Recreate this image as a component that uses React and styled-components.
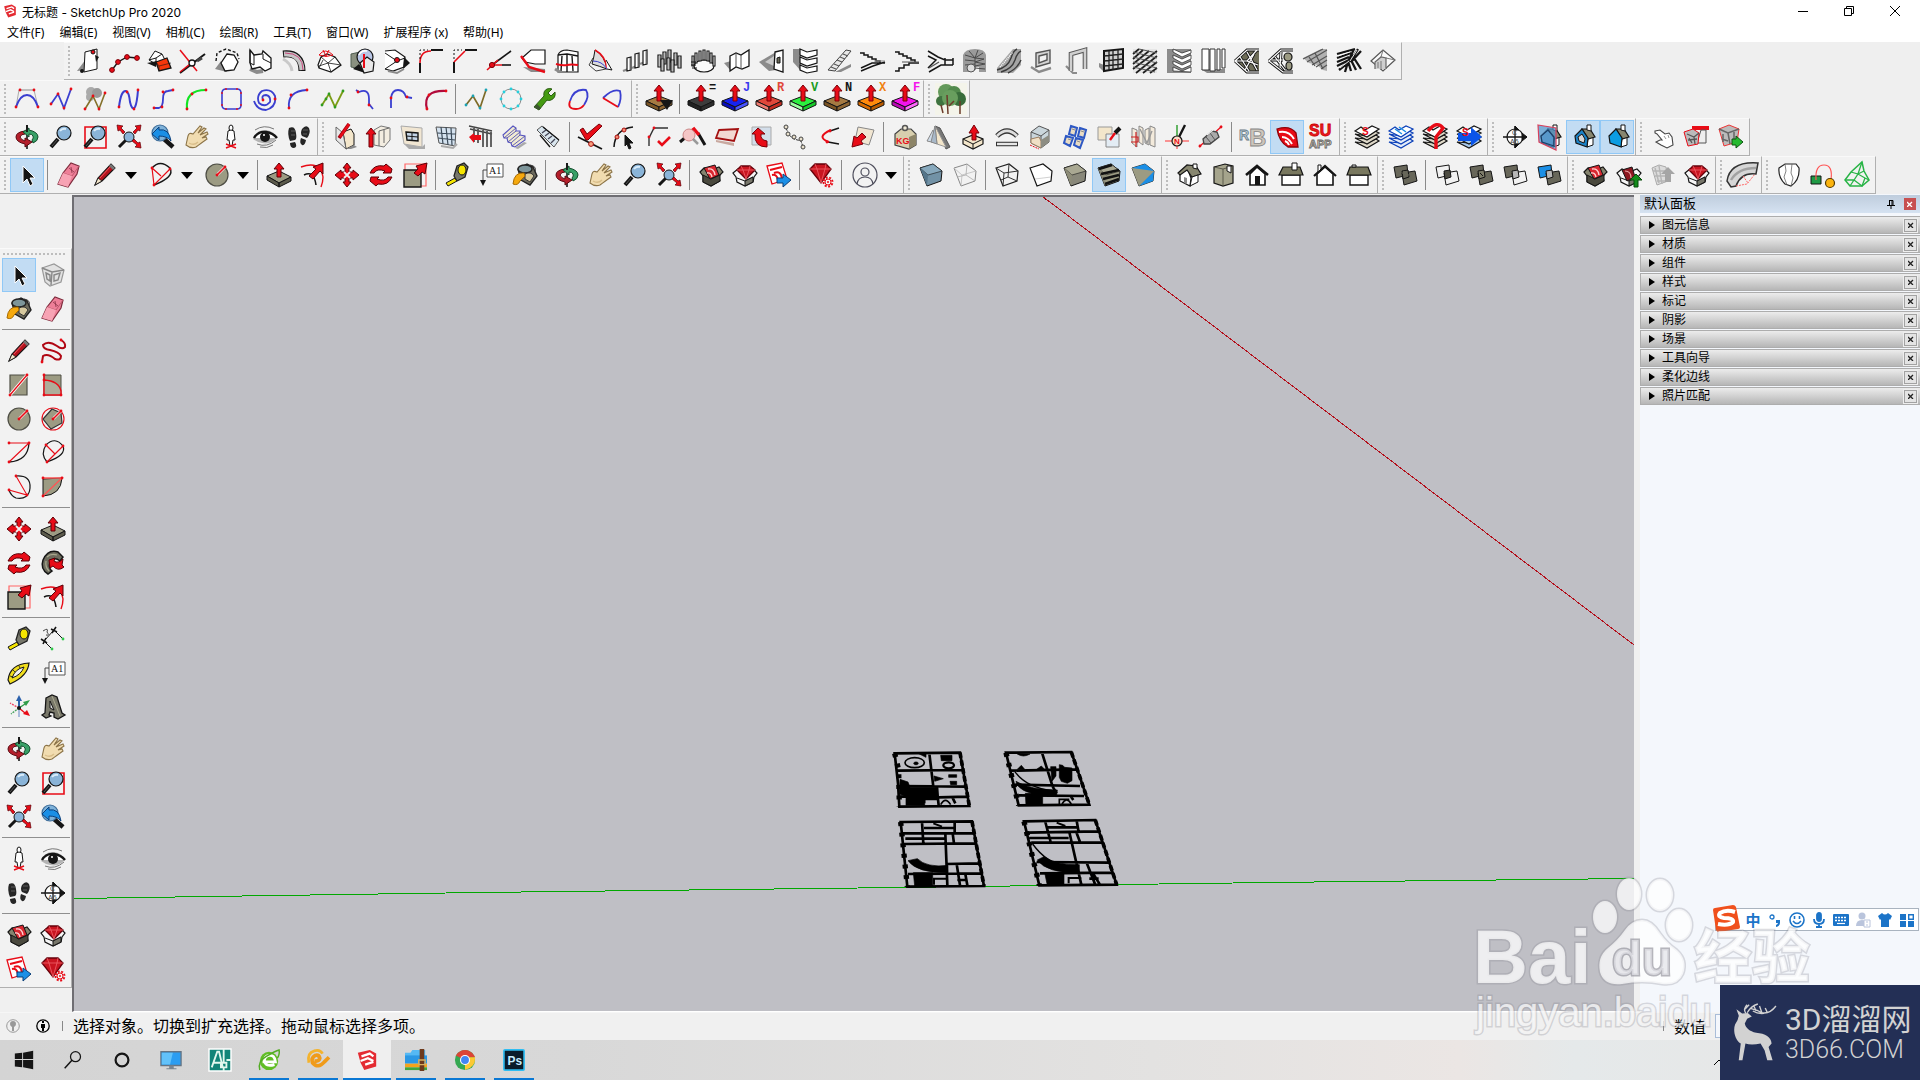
import React, { useState } from 'react';
import styled, { createGlobalStyle, css } from 'styled-components';

const GlobalStyle = createGlobalStyle`
  * { box-sizing: border-box; }
  body {
    margin: 0;
    overflow: hidden;
    background: #f0f0f0;
    color: #000;
    font-family: "Noto Sans", "Noto Sans CJK SC", sans-serif;
    font-size: 12px;
  }
  button, input {
    font: inherit;
    color: inherit;
  }
`;

// ---- icon drawing data: [path, stroke, fill, strokeWidth, dash] on a 24x24 grid ----

const K = '#151515';
const W = '#ffffff';
const R = '#e80c17';
const G = '#8b8b8b';
const L = '#c9c9c9';
const TAN = '#9c9b83';
const DK = '#6b6a59';
const B = '#3a3fd0';
const SKY = '#1b8fe6';
const CREAM = '#f3e6cb';
const GREEN = '#1f9a45';

const dot = (x, y, r = 2) => `M${x - r} ${y}a${r} ${r} 0 1 0 ${2 * r} 0a${r} ${r} 0 1 0 ${-2 * r} 0Z`;
const oval = (x, y, rx, ry) => `M${x - rx} ${y}a${rx} ${ry} 0 1 0 ${2 * rx} 0a${rx} ${ry} 0 1 0 ${-2 * rx} 0Z`;
const dots = (color, ...points) => points.map(([x, y]) => [dot(x, y, 1.4), '', color]);

const slab = (top, left, right, letter, letterColor) => [
  ['M-1 14L12 9L25 14L12 20Z', K, top],
  ['M-1 14L12 20V24L-1 18Z', K, left],
  ['M12 20L25 14V18L12 24Z', K, right],
  ['M12 -2L17 4H14V14H10V4H7Z', '#7a0008', R],
  ...(letter ? [{ t: letter, x: 20, y: 4, s: 12, c: letterColor, f: 'Liberation Mono', w: 700 }] : []),
];

const lens = [
  ['M9 14L2 22', K, '', 4],
  ['M8 15L3 21', '#555', '', 1],
  [dot(15, 8, 7), K, '#8ab4d8', 1.2],
  ['M11 6Q13 3 17 4', '#d9ecfa', '', 2],
];

const smallLens = [
  ['M9 15L2 22', K, '', 3],
  [dot(12, 12, 5), K, '#8ab4d8', 1],
];

const cubeShape = 'M1 5L14 1L23 8L22 18L8 23Z';
const cube = (left, right, top, line = K) => [
  [cubeShape, line, right],
  ['M1 5L14 1L23 8L9 12Z', line, top, 0.6],
  ['M1 5L9 12L8 23Z', '', left],
];

const overlap = (a, b, mid) => [
  ['M1 4L14 2L15 12L3 15Z', K, a],
  ['M9 10L22 8L24 18L11 22Z', K, b],
  ['M9 8L15 7L16 14L10 16Z', K, mid],
];

const box = (top) => [
  ['M1 9L5 5L12 7L20 4L24 9L20 13L21 18L12 23L4 19L4 13Z', K, '#85846f', 1.2],
  ['M4 12L12 16L21 12V18L12 23L4 19Z', K, '#4a493e'],
  ['M5 5L16 2L20 12L11 16Z', K, top],
];

const whiteBox = [
  ['M0 10L5 6L12 9L20 6L24 10L21 14L20 19L12 23L4 19L3 14Z', K, '#f6f6f6', 1.2],
  ['M4 15L12 18L20 14', K, ''],
  ['M12 18L20 14V19L12 23Z', K, '#77766a'],
];

const layers = (line, fill) => [
  ['M0 17L12 23L24 16L21 14L12 18Z', line, fill, 1.2],
  ['M0 13L12 19L24 12L21 10L12 14Z', line, fill, 1.2],
  ['M0 9L12 15L24 8L20 6L12 11Z', line, fill, 1.2],
  ['M0 6L6 2L10 5L17 1L24 4L12 12Z', line, W, 1.2],
];

const miniHouse = (wall) => [
  ['M17 13L22 12V20L16 22Z', K, W],
  ['M11 4L19 4L24 12L17 14Z', K, '#87866f', 1.2],
  ['M4 11L11 4L17 13L16 22L5 18Z', K, wall, 1.2],
  ['M16 0H20V6L16 5Z', K, W],
];

const sketchupBlock = (fill) => [
  ['M0 3L15 0L20 16L5 21Z', R, fill, 1.3],
  ['M3 7L15 4M7 10Q14 7 15 16M5 12Q10 11 11 17', fill === W ? R : W, '', 2],
];

const stairs = (n, line = K, x0 = 1, y0 = 3) => {
  let d = `M${x0} ${y0}`;
  for (let i = 0; i < n; i += 1) d += 'h4v2';
  return [d, line, '', 1.5];
};

const icons = {
  sheet: [['M-2 22L7 10L10 21Z', '', G], ['M6 3L18 0L18 20L5 23Z', K, W], [dot(14, 3), K, R], [dot(3, 22), '', K], ['M16 6L20 8L17 13Z', '', K]],
  nodes: [['M-1 21L5 13L14 8L24 9', K, '', 1.4], ...[[-1, 21], [5, 13], [14, 8], [24, 9]].map(([x, y]) => [dot(x, y, 2.4), '#7a0008', R])],
  redBox: [['M2 11L8 2L15 5L18 11L9 15Z', K, W], ['M2 11L9 9L15 5M9 9L9 15', K, ''], ['M0 14L10 12L9 18Z', '', K], ['M9 13L20 9L24 19L12 22Z', K, '#f5370b', 1.3], ['M9 13L12 17L12 22M12 17L24 14', K, '', 0.6]],
  cut: [['M-1 1L16 22', R, '', 1.5], ['M-1 24L24 5', K, '', 2], ['M-1 23L9 15', R, '', 1.5], ['M16 12L21 9', '#444', '', 3], [dot(11, 14, 3), K, W, 1.3]],
  hexDash: [['M0 20L6 12L12 23Z', '', G], ['M1 12L2 4L11 0L22 4L24 10', K, '', 1.4, '3 2'], ['M12 5L19 6L23 13L19 21L10 22L6 14Z', K, W, 1.3]],
  push: [['M1 20L8 23L14 22', G, '', 4], ['M1 1L5 6L13 5L14 2L22 9V19L16 22L11 18L3 20L1 14Z', K, W, 1.3], ['M1 1V14L5 16V6M14 10L22 14M14 10V5', K, '']],
  pipe: [['M0 10Q8 14 9 22', L, '', 3], ['M0 5Q19 3 19 22', K, '', 7], ['M1 5Q18 4 19 21', '#c6c6c6', '', 5], ['M2 4Q20 4 20 21', '#c8487c', '', 1]],
  dome: [['M1 16L4 8L10 5L18 8L24 16L14 23L2 19Z', K, W, 1.2], ['M2 17L11 14L24 16M11 14L14 23M4 8L11 14L18 8M2 19L6 11', K, '', 0.8], ['M2 6Q8 -2 16 6Q9 9 2 6M6 1L9 7L12 1', R, '']],
  sphereMix: [['M0 5L9 3L12 12L10 20L0 18Z', '#4f5d50', '#8a9080'], ['M2 20L14 24L8 15Z', '', K], [dot(14, 8, 8), K, '#b9c6e6', 1.2], ['M9 14L16 8L23 13L22 22L13 24Z', K, '#e9e9e9', 1.2], ['M13 5V19', R, '', 2], ['M8 6Q10 1 16 2', W, '', 1.6]],
  hexCone: [['M0 2L10 1L20 8L19 18L8 22L0 20', K, W, 1.2], ['M0 4L12 12L0 20', K, ''], ['M12 12L20 9', K, ''], ['M19 8L25 14L18 20Z', '', K], [dot(12, 11, 2.5), K, R], ['M3 22L12 24L19 20', G, '', 2]],
  fillet: [['M1 24V14', K, '', 2], ['M1 14Q1 2 12 2', R, '', 1.6], ['M12 1H24', K, '', 2], ['M1 10V1H9', K, '', 1, '2 2']],
  chamfer: [['M1 24V13', K, '', 2], ['M1 13L12 2', R, '', 1.6], ['M12 1H24', K, '', 2], ['M1 10V1H9', K, '', 1, '2 2']],
  angle: [['M5 16L24 2', K, '', 1.6], ['M0 21L11 11M5 16H15', R, '', 1.6], ['M15 16H24', K, '', 1.6], [dot(5, 16, 2.6), '#7a0008', R]],
  redEdge: [['M1 9L10 1H24V15H14L4 13Z', K, W, 1.2], ['M2 18L10 23H24V20Z', '', G], ['M0 7L3 11L8 18L24 23', R, '', 2.4]],
  redWave: [['M3 6Q5 1 12 1L23 3V23H3Z', K, W, 1.2], ['M3 6L12 5L23 7M12 5V23M7 7L6 22M17 7L18 22', K, '', 1.4], ['M0 20L5 23', G, '', 3], ['M1 15Q8 17 12 16T23 16', R, '', 2]],
  sail: [['M0 16L4 9L22 19L7 22Z', K, '#f4f4f4', 0.8], ['M3 15Q5 8 6 1Q16 7 18 20Q10 17 3 15Z', K, '#dcdcdc'], ['M6 1Q17 7 18 20', R, '', 1.5], ['M4 12Q13 12 18 20', B, ''], ['M18 20L23 21L17 11', K, W]],
  posts: [['M0 22L8 19M9 19L16 16M17 15L22 13', G, '', 2.4], ['M4 9L8 8V21L4 22ZM12 5L16 4V18L12 19ZM20 2L24 1V15L20 16Z', K, W, 1.2], ['M7 9V21M15 5V18M23 2V15', '#555', '', 0.8]],
  manyPosts: [[1, 6], [6, 3], [11, 1], [17, 4], [21, 7], [4, 10], [10, 9], [14, 11]].flatMap(([x, y]) => [[`M${x} ${y}h3v12h-3Z`, K, W, 1.2], [`M${x + 2} ${y + 1}v11`, '#555', '', 0.8]]),
  ringPosts: [[oval(13, 17, 10, 6), K, '#fafafa', 1.2], ...[1, 4, 8, 12, 16, 19, 22].map((x, i) => [`M${x} ${[7, 4, 2, 1, 2, 4, 7][i]}h2v10h-2Z`, K, W, 1.1]), ['M0 13H5M0 16H5M1 19H6', K, '', 1.2]],
  screen: [['M-1 14L6 12V22Z', '', G], ['M5 7L11 4L16 6L24 1V17L17 20L11 18L5 22Z', K, W, 1.3], ['M11 4V18M16 6V20', '#555', '']],
  wedgeWindow: [['M0 13L17 3V21L10 22Z', '', G], ['M6 13L15 7V17Z', '', L], ['M16 3L24 1V23L15 20Z', K, W, 1.3], ['M18 9L21 8V14L18 14Z', K, DK]],
  shelves: [['M0 0H8V22L0 13Z', '', '#8c8c8c'], ['M7 0L14 3L24 1V6L14 9L7 6ZM7 8L14 11L24 9V14L14 17L7 14ZM7 16L14 19L24 17V22L14 24L7 21Z', K, W, 1.2]],
  ladder: [['M8 23L24 15L24 18L14 23Z', '', G], ['M1 21L19 1L24 2L8 22Z', '#444', '#e8e8e8'], ['M4 18L9 20M7 15L12 17M10 11L15 13M13 8L18 10M16 5L21 7', '#555', '', 1.1]],
  zig1: [stairs(5, K, -1, 4), ['M0 22L12 17L24 13M0 19L11 14H24', K, '', 1.4], ['M13 12H24', G, '']],
  zig2: [stairs(5, K, 0, 3), ['M0 22H4V19H9V16H14V14H24', K, '', 1.5], ['M7 13H24', '#555', '']],
  zig3: [['M-1 2L9 8L16 11H24M-1 7L7 11L-1 19M0 23L12 16H24M16 9V16M24 9V16', K, '', 1.5], ['M0 19L10 13', '#555', '', 1.2]],
  spiral: [['M0 6Q2 0 12 0T23 6V23H16V18H6V23H0Z', '', '#9a9a9a'], ['M2 6L12 9L20 4M6 2L12 9L15 1M12 9V21M12 9L21 10L12 13L22 15L12 17M2 11L12 12M2 16L12 15M12 19L22 20', '#4a4a4a', ''], [oval(8, 19, 4, 4), '#555', '#ddd']],
  escalator: [['M4 14L16 0H24V16L16 24H0V19Z', '', '#a5a5a5'], ['M0 21Q11 18 14 9Q16 2 20 0M4 23Q15 20 18 11Q20 4 24 2M11 24Q20 20 24 11', '#3c3c3c', '', 1.4], ['M3 18L16 3', W, '', 1.4, '1 1']],
  frame: [['M0 18L8 23L20 19', G, '', 2.4], ['M5 4L19 1V14L5 18ZM8 7L16 5V11L8 14Z', '#555', '#d4d4d4', 1.4, '']],
  archFrame: [['M1 17L8 24H12', G, '', 2.2], ['M6 22V5L20 1V20', '#555', '', 4.6], ['M6 22V5L20 1V20', '#d0d0d0', '', 2.6]],
  gridWall: [['M0 14L5 16V23L0 18Z', '', G], ['M5 2L24 0V19L5 22Z', K, '#cfcfcf', 2], ['M10 2V21M14 1V21M19 1V20M5 7L24 5M5 12L24 10M5 17L24 15', '#222', '', 1.3]],
  lattice: [['M0 0H24V24H0Z', '', '#e6e6e6'], ['M0 5L6 0M0 10L10 1M0 15L16 2M0 20L24 2M3 24L24 7M10 24L24 13M17 24L24 19', '#1d1d1d', '', 1.7], ['M0 3L24 9M0 8L24 14M0 13L24 19M0 18L22 23M6 0L24 4', '#555', '', 1]],
  chevrons: [['M0 0H24V24H0Z', '', '#8c8c8c'], ['M6 0L15 4L24 1V4L15 8L6 3ZM6 6L15 10L24 6V10L15 14L6 9ZM6 12L15 16L24 12V16L15 20L6 15ZM6 18L15 22L24 18V23L6 22Z', '#333', W, 0.8]],
  louvres: [['M0 20L6 24H24V20Z', '', G], ['M1 0H8V21H1ZM9 0H14V22H9ZM16 0H19V21H16ZM21 0H24V19H21Z', '#333', W, 1]],
  truss1: [['M0 12L12 0H24V24H11Z', '', '#6e6d58'], ['M0 12L12 1H24M0 12L12 23H24M0 12H12M5 8L14 22M12 3L22 21M22 1L12 12L23 16M10 21L19 5', K, '', 3], ['M0 12L12 1H24M0 12L12 23H24M0 12H12M5 8L14 22M12 3L22 21M22 1L12 12L23 16M10 21L19 5', W, '', 1.2]],
  truss2: [['M0 12L12 1H24M0 12L14 23H24M3 11H14M6 8L16 21M12 3L11 18', K, '', 3], ['M0 12L12 1H24M0 12L14 23H24M3 11H14M6 8L16 21M12 3L11 18', W, '', 1.2], [oval(19, 8, 4, 4), K, TAN, 1.2], [oval(20, 17, 3, 4), K, TAN, 1.2]],
  corrugated: [['M0 9L18 0H24V22L20 21L14 16L6 14Z', '', '#b0b0b0'], ['M0 10L20 0M4 13L24 1M9 16L24 7M13 18L24 11M18 20L24 16M6 8L12 17M12 4L20 20', '#555', '', 1.2]],
  rafters: [['M0 5L18 0M0 9L14 4M0 13L12 8M0 17L12 11M2 21L12 13M17 0L11 13M21 0L13 13M24 2L14 13M24 20L15 6M19 21L13 9M14 22L11 12M8 23L11 13', K, '', 2.3], ['M1 7L13 3M20 1L13 12M3 19L12 12', W, '', 0.9]],
  roof: [['M0 12L12 1L24 11L12 22Z', '#555', '#fafafa', 1.2], ['M4 20V13L10 8L15 9V20', '#666', '#cfcfcf', 1.2], ['M12 1L10 8M15 9L24 11M7 19V13M10 20V12', '#777', '']],

  bezier: [['M4 3H19', G, ''], ['M4 3L1 20M19 3L23 20', G, '', 0.7], ['M1 20Q5 8 12 8T23 20', B, '', 2], ...dots(R, [5, 3], [19, 3], [1, 20], [23, 20])],
  polyN: [['M2 17L9 7L15 21L22 2', B, '', 1.8], ...dots(R, [2, 17], [9, 7], [15, 21], [22, 2])],
  cloudN: [[dot(8, 5, 5), '', '#aaa'], [dot(14, 6, 5), '', '#999'], [dot(7, 10, 4), '', '#aaa'], ['M2 22L10 9L16 22L22 6', '#84702a', '', 1.6], ...dots(R, [2, 22], [10, 9], [16, 22], [22, 6])],
  smoothN: [['M2 20Q4 3 9 4Q12 5 13 15Q15 24 18 20Q20 16 21 3', B, '', 2], ...dots(R, [2, 20], [10, 5], [17, 22], [21, 3])],
  sCurve: [['M3 21H8Q12 20 12 12T17 4L22 3', B, '', 1.8], ...dots(R, [3, 21], [11, 20], [12, 5], [22, 3])],
  greenArc: [['M2 22Q0 3 21 3', '#11e422', '', 2.2], ...dots(R, [2, 22], [7, 7], [21, 3])],
  roundRect: [['M7 2H18Q22 2 22 6V18Q22 22 18 22H7Q3 22 3 18V6Q3 2 7 2Z', B, '', 1.6], ...[[7, 2], [18, 2], [22, 6], [22, 18], [18, 22], [7, 22], [3, 18], [3, 6]].map(([x, y]) => [dot(x, y, 0.9), '', R])],
  swirl: [['M10 13Q8 8 13 8Q18 9 17 15Q12 21 6 16Q3 9 9 4Q18 1 22 9Q24 20 13 23Q4 23 1 14', B, '', 1.8], ...dots(R, [10, 13], [22, 12])],
  blueArc: [['M2 21Q0 4 20 3', B, '', 1.8], ...dots(R, [2, 21], [4, 8], [20, 3])],
  greenN: [['M1 18L8 7L14 20L22 4', '#7b9b16', '', 1.8], ...dots('#2f9d1f', [1, 18], [5, 12], [8, 7], [14, 20], [22, 4])],
  hook: [['M1 3L4 5Q14 1 14 12L14 17L18 22', B, '', 1.8], ...dots(R, [3, 5], [14, 18])],
  cane: [['M2 21V11Q3 3 9 3Q15 3 17 10L23 11', B, '', 1.8], ...dots(R, [2, 11], [18, 10])],
  wineArc: [['M4 22Q-1 3 23 4', '#b10b3b', '', 2.2], ...dots(R, [4, 22], [6, 8], [23, 4])],
  cyanN: [['M1 18L8 9L15 21L21 3', '#7d6b28', '', 1.7], ...dots('#1aa3b5', [1, 18], [8, 9], [15, 21], [21, 3])],
  ring: [[dot(12, 12, 10), G, ''], ...dots('#23d0dd', [12, 2], [19, 5], [22, 12], [19, 19], [12, 22], [5, 19], [2, 12], [5, 5])],
  wrench: [['M1 20L11 9Q10 4 14 2Q17 1 19 2L15 6L18 9L22 5Q23 11 18 13Q15 14 14 13L6 23Z', '#2c5d14', '#459b12'], ['M1 20L4 17L8 21L6 23Z', '', '#3c5530']],
  loop: [['M3 14Q7 1 19 3Q23 9 17 18', B, '', 1.8], ['M3 14Q0 22 9 22Q14 22 17 18', R, '', 1.8]],
  wedge: [['M2 11Q12 1 19 4Q21 12 17 20', B, '', 1.8], ['M2 11L17 20', R, '', 1.8]],
  slabMenu: [...slab('#a57a42', '#7a5423', '#8c6431'), ['M13 13H26L20 23Z', '', K]],
  slabBlack: slab('#3c3c3c', '#222', '#2c2c2c', '=', K),
  slabBlue: slab('#1723f0', '#080dba', '#4752ff', 'J', '#3a3aee'),
  slabRed: slab('#e0483b', '#f07a70', '#c42a20', 'R', '#e0483b'),
  slabGreen: slab('#2bef3f', '#9bffa0', '#17c92a', 'V', '#1a9c22'),
  slabBrown: slab('#a57a42', '#7a5423', '#8c6431', 'N', K),
  slabOrange: slab('#ff8a0c', '#d86a00', '#b85a00', 'X', '#f08110'),
  slabPink: slab('#f414ec', '#b90bb4', '#ff66fa', 'F', '#f414ec'),
  tree: [['M-4 -4H28V28H-4Z', '', '#f4f4ea'], [dot(7, 5, 8), '', '#63995a'], [dot(15, 6, 7), '', '#528a4c'], [dot(2, 14, 5), '', '#3f7340'], [dot(20, 12, 7), '', '#386c3a'], [dot(11, 11, 8), '', '#689e5e'], ['M8 8L9 27M15 14L10 19M21 14V27M2 18L4 26', '#6b3a2a', '', 1.5]],

  orbit: [['M12 0V24', K, '', 1.6], ['M10 6Q1 7 1 12Q1 17 10 19V22L17 17L10 13V16Q6 15 5 12Q6 9 10 9Z', '#5a0910', '#b51f2b'], ['M14 5Q23 7 23 12Q23 16 18 18L17 15Q19 13 18 11Q17 9 14 9V12L8 7L14 3Z', '#134d2c', '#38a067'], ['M12 0V7', K, '', 1.8]],
  zoom: lens,
  zoomWindow: [['M2 2H23V23H2Z', R, '', 1.6], ...lens],
  zoomExtents: [...smallLens, ['M0 0L6 1L4 3L8 7L6 9L3 5L1 6ZM24 0L18 1L20 3L16 7L18 9L21 5L23 6ZM24 23L18 22L20 20L15 16L17 14L21 18L23 17Z', '#5d0007', R, 0.7]],
  previous: [['M13 14L22 22', K, '', 4.5], [dot(9, 8, 8), '#3f6d99', '#7fb2d9', 1.2], ['M1 9L8 2V5Q18 3 20 16Q16 11 8 11V15Z', '#0a3f7b', SKY]],
  hand: [['M1 20L3 11Q4 7 8 9L15 1L17 2L13 8L19 3L21 4L15 10L22 7L23 9L17 13L21 12L22 14Q15 19 11 22Q6 24 1 20Z', '#8c7448', '#f1dcb0', 1.1], ['M4 18Q9 21 13 17', '#d9be8a', '', 1.4]],
  walker: [[oval(12, 3, 2, 3), K, W], ['M9 6Q12 4 15 6L16 15H14L13 21H11L10 15H8Z', K, W], ['M7 23L17 19M7 19L17 23', R, '', 1.5]],
  eye: [['M0 14Q4 4 13 5Q20 6 24 12Q19 20 9 18Q4 17 0 14Z', '', '#b3b3b3'], ['M1 13Q5 6 13 7Q20 8 24 13', K, W, 2.4], [dot(12, 12, 5), '', K], [dot(11, 10, 1), '', W], ['M2 5Q11 -1 21 4M4 19Q14 23 23 15M7 22Q14 24 20 20', '#777', '', 1]],
  feet: [['M2 3Q8 0 9 8Q10 14 8 15L3 16Q0 9 2 3ZM3 18L8 17Q11 22 7 23Q3 23 3 18Z', '', '#262626'], ['M15 4Q19 -1 22 3Q24 8 20 13L15 11Q13 8 15 4ZM14 13L19 15Q18 21 15 20Q12 18 14 13Z', '', '#262626'], ['M4 6H8M4 10H8M16 5H21M16 9H20', '#777', '', 0.7]],
  wallPen: [['M10 7L18 4L21 9V20L13 24Z', K, CREAM], ['M3 2L10 8L13 24L3 15Z', '#666', '#e6e6e6'], ['M13 24L21 20L24 22L18 24Z', '', G], ['M16 -1L6 13', '#a10010', '', 3.6], ['M16 -1L7 12', R, '', 2.2]],
  wallUp: [['M7 5L14 1L23 3V15L17 22L7 20Z', '#777', '#f3ede1'], ['M12 6L22 3M12 6V21M17 5V18', '#666', ''], ['M4 3L9 9H6V22H2V9H-1Z', '#6f0009', R]],
  window: [['M0 1L21 3L21 22L3 19Z', '#aaa', '#f1e6d2'], ['M3 19L21 22L24 19V24H8Z', '', '#aaa'], ['M5 7L17 8L17 16L6 15Z', K, '#c4d4e6', 1.4], ['M11 7V16M5 11L17 12', K, '']],
  windowGrid: [['M1 2L21 3L20 21L4 18Z', '#555', '#d4e2ef'], ['M6 2L8 19M11 2L13 20M16 3L17 20M2 8L21 9M3 13L20 15', '#3b4a58', '', 1.2], ['M6 21L18 23L22 19', '#aaa', '', 2]],
  fence: [['M0 1L23 6M1 4L23 9', '#444', '', 1.6], ['M5 3V17M9 4V18M14 5V22M18 6V22M22 7V22', '#555', '', 1.8], ['M0 12L5 8V10H12V15H5V18Z', '', R]],
  steps: [['M0 10L10 1L13 3L13 6L17 6L17 10L22 11L22 15L12 22L9 21L8 18L5 17L4 13L1 13Z', '#5553c0', '#f0ebd2', 1.1], ['M1 13L13 3M5 17L17 7M9 21L22 11M4 13L13 6M8 18L17 10', '#514fb0', '', 0.9], ['M12 23L21 17L24 18L15 24Z', '', '#aaa']],
  stairway: [['M0 5L5 1L22 15L17 22Z', '#555', '#d9e6ee'], ['M3 10L13 22M6 2L22 15', K, '', 1.3], ['M5 8L9 5M8 11L12 8M11 14L15 11M14 18L18 14', '#445', '', 1.3]],
  check: [['M1 5L4 3L8 9L20 -1L23 1L9 15H7Z', '#7a0008', R], ['M-1 12L23 24', K, '', 1.8], [dot(12, 19, 2.4), '#a11', '#f8a080']],
  nodePick: [['M1 22Q2 4 20 2', K, '', 1.5], [dot(4, 12), '#a11', '#f58b72'], [dot(11, 5), '#a11', '#f58b72'], ['M12 10L20 18H16L18 23L16 24L14 19L12 21Z', K, K]],
  cornerCheck: [['M2 21V13L7 3H21', '#333', '', 1.4], ...dots(R, [2, 12], [7, 3]), ['M11 16L15 20L23 12', R, '', 2.6]],
  magnifyCorner: [['M-1 17L6 11M17 8L24 20', K, '', 3], ['M9 7L13 4L18 10', R, '', 3.4], [dot(8, 10, 6), '#c88', '#f4c6c6'], ['M12 14L17 19', '#999', '', 2.5]],
  redPlate: [['M4 5L23 4L19 16L1 13Z', '#a31010', '#f2d9d2', 1.8], ['M1 15L19 18L19 21L1 17Z', '', '#c9a9a0']],
  bentArrow: [['M3 2H22V20H3Z', '#aaa', '#d3deea'], ['M9 3L16 9H12Q11 15 18 16V22Q5 22 6 9H3Z', '#7a0008', R]],
  chain: [['M3 3L6 10L11 14L18 16L20 22', '#333', '', 1, '3 1'], ...[[3, 2], [5, 9], [11, 12], [18, 14], [20, 22]].map(([x, y]) => [dot(x, y, 2), '#444', '#e8e0cc'])],
  redBend: [['M22 3L13 6M11 17L22 19', K, '', 1.4], ['M14 5Q-2 12 12 17', R, '', 2], ...dots(R, [13, 6], [10, 17])],
  cardArrow: [['M7 2L23 5L18 20L4 16Z', '#888', '#f1e6d2'], ['M11 8L15 12L10 16L12 19L1 22L3 11L6 13Z', '#7a0008', R]],
  weight: [['M2 9L8 4H18L23 9V20L16 24L2 20Z', '#444', '#d8cfae', 1.2], ['M16 12L23 9V20L16 24Z', '', '#8d8568'], [dot(12, 3, 2.5), '#555', '#efe9d5', 1.5], { t: 'KG', x: 3, y: 19, s: 9, c: R, w: 700 }],
  pyramid: [['M0 16L6 5L9 18Z', '#888', '#cfdbe8'], ['M8 1L13 3L23 22L19 24Z', '#555', '#777'], ['M8 1L19 22L10 19Z', '#999', CREAM], ['M8 1L10 19L4 17Z', '#888', '#a8b8c8']],
  raise: [['M2 14L12 10L22 14V19L12 24L2 19Z', K, CREAM, 1.2], ['M2 14L12 19L22 14M12 19V24', K, ''], ['M13 0L18 8H15V15H11V8H8Z', '#7a0008', R]],
  bridge: [['M2 11Q12 1 22 11', '#333', '', 5], ['M2 11Q12 1 22 11', '#ddd', '', 2.6], ['M1 19H23', '#333', '', 4.5], ['M2 19H22', '#e6e6e6', '', 2.4]],
  cutCube: [['M2 7L10 1L20 5V17L12 23L2 18Z', '#555', '#cad6dc'], ['M2 7L12 11L20 5M12 11V23', '#555', ''], ['M2 14L10 12L12 16V23L2 18Z', '#9b7e61', '#f0e0c6'], ['M12 15L20 10V17L12 23Z', '', '#8d8d83'], ['M1 20L10 24', R, '', 1, '2 1']],
  blocks: [['M8 1L14 3L12 11L6 9ZM17 3L23 5L21 13L15 11ZM3 11L10 13L7 21L1 18ZM13 13L20 15L17 23L11 20Z', '#2d58c4', '#e9dcc4', 2], ['M9 4L12 5M18 6L21 7M5 14L8 15M14 16L17 17', G, '']],
  picker: [['M1 2H15V15H1Z', '#999', CREAM], ['M9 9H22V22H9Z', '#888', '#e3ecf4'], ['M23 3L18 8', K, '', 4], ['M18 8L13 15', R, '', 2.4]],
  books: [['M1 3L6 5V22L1 18ZM8 1L12 3V20L8 17ZM14 5L18 3V20L14 18ZM19 1L24 3V22L19 20Z', '#888', '#f3eadb'], ['M0 12H7V17H0M5 7V22', '#c22', '', 1.2], ['M9 4L16 18L21 6', '#999', '', 1.4]],
  north: [['M12 0V12', '#35a035', '', 1.5], ['M20 0L14 12', K, '', 2.4], ['M0 16H24M12 14V24', '#f33', ''], [dot(12, 16, 5), K, '#f9dcc8', 1.2], { t: 'N', x: 9, y: 19, s: 8, c: R, w: 700 }],
  plug: [['M0 22L23 1', R, '', 1.2], ...dots(R, [1, 21], [22, 2]), ['M4 14L13 6L18 7L20 12L11 19L5 19Z', '#444', '#aaa', 1.3], ['M7 12L12 18M11 8L16 15', '#555', ''], ['M8 10L14 5', '#eee', '', 1.4]],
  rb: [{ t: 'B', x: 8, y: 21, s: 24, c: '#cdc6bb', w: 700, o: '#858585' }, { t: 'R', x: -2, y: 15, s: 14, c: '#b7d1df', w: 700, o: '#6a7983' }],
  suRed: [['M2 4Q15 0 21 8L23 22L13 22Q4 17 2 4Z', '#8c0007', R, 1.3], ['M4 7Q14 5 19 14M7 12Q13 12 17 19M10 16Q13 17 14 20', W, '', 2]],
  suapp: [{ t: 'SU', x: 0, y: 11, s: 16, c: '#ed1c24', w: 700, o: '#c00' }, { t: 'APP', x: 0, y: 23, s: 11, c: '#e4d8c2', w: 700, o: '#666' }],
  layersS: [...layers(K, '#ded8c8'), { t: 'S', x: 7, y: 10, s: 10, c: R, w: 700 }],
  layersBlue: [...layers('#0a3fb8', '#e4ecf8'), ['M6 4L13 9M10 2L17 7', SKY, '', 1.5]],
  layersRed: [...layers(K, '#ded8c8'), ['M5 6Q14 -5 20 3L13 12V24', R, '', 3.4]],
  layersMove: [...layers(K, '#a6c9ec'), ['M1 8H14V2L25 12L14 21V16H1Z', '', '#0b54e8'], { t: 'S', x: 5, y: 11, s: 10, c: R, w: 700 }],
  section: [[dot(12, 12, 8), K, W, 1.2], ['M0 12H24M12 1V23', K, '', 1.3], ['M12 1L16 5H12ZM12 23L16 19H12ZM19 8L24 12L19 16Z', K, K], { t: 'C', x: 9, y: 10, s: 7, c: '#444' }, { t: 'A6', x: 7, y: 19, s: 7, c: '#444' }],
  sectionHouse: [...miniHouse('#71a2c8'), ['M1 0L19 3V25L2 17Z', '#d8405c', '#4f94cdbb', 1.2], ['M4 11L11 5L17 12V21L5 17Z', '#1c3e66', '', 1.2]],
  houseCut: [...miniHouse('#1b83c8'), ['M7 12L11 9L14 14L13 18L8 16Z', K, '#d8d8d8']],
  houseFill: miniHouse('#0c9de2'),
  pointer: [['M4 6L9 5L14 9L18 8L21 12L22 20L16 23L10 20L5 17L9 15L11 15L6 9L4 8Z', '#444', W, 1.1], ['M13 11L15 14M17 10L18 13', '#777', '', 0.8]],
  boxRed: [['M7 1H24V5H7Z', '', R], ['M16 5H21V18H12Z', '#555', '#eee'], ['M-1 7L8 4L14 8L13 19L3 21Z', R, '#bbb'], ['M2 9L9 12L14 8M9 12L10 19M4 13L7 18M3 15L12 14', '#555', '', 1.3]],
  boxGo: [['M0 4L10 0L20 4L18 17L5 21Z', '#e33', '#bbb'], ['M0 4L9 8L20 4M9 8L11 19M4 9V17M15 7V16M3 14L9 16', '#666', '', 1.5], ['M13 14H17V11L24 17L17 23V20H13Z', '#0c5210', '#25b92f']],

  select: [['M8 3V20L12 16L15 23L18 21L15 15H20Z', W, K, 1]],
  eraser: [['M6 10L14 0L22 3L20 11L11 24L1 21Z', '#7d2b3c', '#ee7f98', 1.2], ['M6 10L15 13L22 3', '#c05a70', ''], ['M6 10L15 13L11 24L1 21Z', '', '#f7a3b4'], ['M12 5L17 9M14 4L15 10', '#8a3347', '', 0.8]],
  pencil: [['M2 22L5 15L18 1L22 5L9 18Z', K, '#b5131d', 1.1], ['M18 1L22 5L20 7L16 3Z', '', '#777'], ['M2 22L5 15L9 18Z', K, CREAM, 0.8], ['M7 15L17 4', '#ef5660', '']],
  arc: [['M3 5Q11 -4 21 5Q26 14 5 22', K, '', 1.4], ['M3 5L5 22L21 6M3 5L12 13', R, '', 1.2], ...dots(R, [3, 5], [21, 6], [5, 22])],
  circle: [[dot(12, 12, 11), '#4e4e45', TAN, 1.2], ['M12 12L20 4', '#f4dada', '', 3], ['M12 12L20 4', R, '', 1.6], ...dots(R, [12, 12], [20, 4])],
  pushpull: [['M0 13L12 8L24 14L12 20Z', K, TAN], ['M0 13V17L12 24V20ZM24 14V18L12 24V20Z', K, '#5c5b4c'], ['M12 0L17 6H14V14H10V6H7Z', '#5d0007', R]],
  offset: [['M3 12Q13 7 15 22', K, '', 1.6], ['M0 4Q19 -3 22 14Q22 19 20 24', R, '', 1.4], ['M8 13L15 6L12 4L22 0L22 11L19 8L12 16Z', '#5d0007', R]],
  move: [['M12 0L16 5H14V9H18V7L24 12L18 17V15H14V19H16L12 24L8 19H10V15H6V17L0 12L6 7V9H10V5H8Z', '#5d0007', R], ['M9 9L15 15M15 9L9 15', '#f2f2f2', '', 1.8]],
  rotate: [['M1 10Q5 1 15 3L17 1L23 6L22 10L14 10L16 8Q8 5 5 10Z', '#5d0007', R], ['M23 14Q19 23 9 21L7 23L1 18L2 14L10 14L8 16Q16 19 19 14Z', '#5d0007', R]],
  scale: [['M2 1H23V23H2Z', '#f66', '', 1.2], ['M1 7H18V24H1Z', K, TAN, 1.4], ['M11 10L15 6L13 3L24 0L22 11L19 9L15 13Z', '#5d0007', R]],
  tape: [['M1 20L10 15L12 18L3 23Z', K, '#f5e500'], ['M9 13L12 3L19 0L23 4L20 14L12 18Z', '#222', '#77776b', 1.3], [oval(17, 7, 4, 5), K, '#f5e500', 1]],
  textNote: [['M8 1H24V14H8Z', '#555', W], ['M8 7H4V20', '#444', ''], ['M1 17H7L4 23Z', '', K], { t: 'A1', x: 10, y: 11, s: 10, c: K, f: 'Liberation Serif', w: 400 }],
  bucket: [['M5 6L14 1L20 4L24 13L17 22L8 17Z', '#222', '#6c6a5c', 1.4], [oval(12, 6, 7, 4), '#222', '#7d959a', 1.4], ['M12 11Q18 8 21 13L17 19L12 16Z', '#333', '#d7c99f'], ['M11 10Q1 9 0 21Q5 23 7 18L12 13Z', '#a76a00', '#f5a90e'], ['M17 2Q24 3 22 9', '#333', '']],
  warehouse: [...box('#d92730'), ['M9 6Q15 5 16 12M8 10Q12 9 13 14', '#ffd0d0', '', 1.4]],
  extWarehouse: [...whiteBox, ['M4 7L8 3H17L22 7L13 16Z', '#66000a', '#c91520', 1.3], ['M4 7H22M8 3L10 7L13 16L16 7L17 3', '#f1626b', '', 0.8]],
  layout: [...sketchupBlock(W), ['M10 15H16V11L24 17L16 24V20H10Z', '#0b3e77', SKY]],
  rubyGear: [['M1 6L6 1H17L22 6L12 20Z', '#66000a', '#c91520', 1.3], ['M1 6H22M6 1L8 6L12 20L16 6L17 1', '#f1626b', '', 0.8], [dot(19, 19, 4.5), R, '#f2f2f2', 2, '2 1.5'], [dot(19, 19, 3), R, '#f2f2f2'], [dot(19, 19, 1), '', R]],
  user: [[dot(12, 12, 12), '#4e4e5c', '', 1.2], [dot(12, 9, 4), '#4e4e5c', '', 1.2], ['M4 21Q5 14 12 14T20 21', '#4e4e5c', '', 1.2]],
  cubeX: cube('#55758a', '#7292a6', '#88a9bd'),
  cubeBack: [[cubeShape, '#888', ''], ['M1 5L9 12L8 23M9 12L23 8', '#bbb', '', 0.8], ['M14 1L13 12L22 18M13 12L4 14', '#aaa', '', 0.8]],
  cubeWire: [[cubeShape, '#222', '', 1.2], ['M1 5L9 10L8 23M9 10L23 8M14 1L13 14L22 18M13 14L6 17', '#333', '', 1]],
  cubeHidden: [[cubeShape, K, W, 1.2], ['M6 16L22 14', '#bbb', '', 0.7]],
  cubeShade: cube('#8d8c78', '#89887a', '#a9a892'),
  cubeTexture: [...cube('#8d8c78', '#9c9b83', '#a9a892'), ['M2 6L15 2M4 11L22 7M6 16L22 12M8 21L22 16', '#111', '', 2.6]],
  cubeMono: [[cubeShape, '#333', '#8b8a76'], ['M1 5L14 1L23 8L8 12Z', '', SKY], ['M23 8L22 18L8 23Z', '', SKY], ['M1 5L23 8L8 23Z', '', TAN]],
  houseIso: [['M3 9L11 7L14 15L13 23L3 18Z', K, W, 1.2], ['M1 10L10 2L19 3L24 11L15 14L10 7L3 12Z', K, '#87866f', 1.2], ['M15 14L21 12V19L13 23Z', K, W], ['M16 1H20V6L16 5Z', K, W], ['M7 14L10 15V21L7 20Z', '', G]],
  houseTop: [['M3 4L14 1L22 3V20L12 23L3 20Z', K, '#a5a48c', 1.2], ['M12 6V23M3 4L12 6L22 3', '#4a493e', '', 0.8], ['M16 3H20V10L16 8Z', K, W]],
  houseFront: [['M5 11V22H20V11L12 4Z', K, W, 1.6], ['M1 12L12 3L23 12', K, '', 2.6], ['M10 13H15V22H10Z', '', K]],
  houseRight: [['M3 12H21V22H3Z', K, W, 1.4], ['M4 4H21L24 12H0Z', K, '#79785f', 1.2], ['M13 0H18V7H13Z', K, W]],
  houseBack: [['M4 11V22H20V11L12 4Z', K, W, 1.6], ['M1 13L12 3L23 13', K, '', 2.2], ['M5 2H8V6L5 9Z', K, W]],
  houseLeft: [['M3 12H21V22H3Z', K, W, 1.4], ['M3 4H21L24 12H0Z', K, '#79785f', 1.2], ['M5 2H9V4H5Z', K, '#eee']],
  outerShell: [...overlap('#68675a', '#68675a', '#68675a'), ['M10 9L15 13', '#68675a', '', 3]],
  intersect: overlap('none', 'none', '#4d4c42'),
  union: [...overlap('#68675a', '#68675a', '#7d7c6a'), ['M11 10L14 13', K, '']],
  subtract: overlap('#68675a', 'none', '#b8b8b8'),
  split: overlap(SKY, '#68675a', '#b8b8b8'),
  boxUp: [...whiteBox, ['M5 7L15 4L18 14L10 18Z', K, '#8d1720'], ['M8 8Q14 8 14 15', '#e8a0a0', '', 1.2], ['M19 11L25 17H21V24H17V17H13Z', '#064b0a', '#128b1a']],
  boxGrey: [['M1 5L8 2L15 4L17 18L6 22Z', '#aaa', '#ddd'], ['M2 8H16M4 13H17M6 18H17M8 3L11 21M4 5L8 20', '#b5b5b5', '', 1.4], ['M17 4L24 11H20V19H14V11H10Z', '', '#a5a5a5']],
  fan: [['M-4 18Q-1 -2 27 0L25 11Q10 9 5 23L0 24Z', '#333', '#d6d6d6', 1.5], ['M0 17Q7 5 25 5', '#a2a2a2', '', 2.4], ['M5 23L16 21L24 11M12 13L17 20', '#f66', '', 1, '2 1']],
  shield: [['M2 5L8 1H19L22 5Q23 17 14 23L8 21Q1 14 2 5Z', '#222', W, 1.2], ['M8 1L9 8L7 14L10 22M15 1L14 10L16 15L14 23', '#666', '', 0.8]],
  dropper: [['M0 13H10V21H0Z', K, GREEN], ['M5 17Q4 2 13 2T20 17', '#f55', '', 1.2], [dot(19, 20, 4.5), '#543b00', '#fcb40e', 1.2]],
  frameGreen: [['M0 17L6 9L17 -1L19 8L24 17L17 23H5Z', '#28b446', '', 1.5], ['M6 9L13 11L17 -1M13 11L19 8M0 17L9 17L13 11L20 15L24 17M9 17L5 23M9 17L17 23L20 15', '#28b446', '', 1.3]],

  component: [['M1 5L13 1L23 7L20 19L9 23L4 19Z', '#999', '#e2e2e2', 1.2], ['M1 5L11 9L23 7M11 9L10 22M5 10L9 12L9 18L6 16ZM13 12L19 10L17 17L13 18Z', '#888', '', 1.4]],
  freehand: [['M20 1Q25 4 24 8Q21 11 16 7Q7 1 2 6Q2 10 9 11Q18 13 20 17Q20 22 14 20Q7 14 2 17L1 23', '#b00713', '', 2], ...dots(R, [1, 23], [20, 1])],
  rect: [['M3 2H20V22H3Z', '#4e4e45', TAN, 1.2], ['M3 22L20 2', W, '', 3], ['M3 22L20 2', R, '', 1.3], ...dots(R, [3, 22], [20, 2])],
  rotRect: [['M3 2H20V22H3Z', '#4e4e45', TAN], ['M3 2V22H20V18Q18 8 3 7', R, '#aead9a', 1.4], ...dots(R, [3, 2], [3, 7], [3, 22], [20, 22])],
  polygon: [[dot(12, 12, 11), R, '', 1.1], ['M11 2L20 6L21 16L10 22L2 12Z', '#333', TAN, 1.2], ['M12 12L20 4', '#f4dada', '', 3], ['M12 12L20 4', R, '', 1.5], ...dots(R, [12, 12], [20, 4])],
  arcCorner: [['M22 2Q21 20 2 21', K, '', 1.3], ['M2 2H22L2 21', R, '', 1.1], ...dots(R, [2, 2], [22, 2], [2, 21])],
  arcHalf: [['M5 4Q14 -5 22 5Q26 14 6 21Q-1 13 5 4', K, '', 1.2], ['M5 4L14 13M22 5L6 21', R, '', 1.2], ...dots(R, [5, 4], [22, 5], [6, 21])],
  arc3: [['M9 1Q24 0 23 13Q22 25 9 23Q4 21 2 15', K, '', 1.2], ['M9 1L20 20L2 15', R, '', 1.1], ...dots(R, [9, 1], [20, 20], [2, 15])],
  pie: [['M2 4L21 3Q20 20 2 21Z', K, TAN], ['M2 3H21L2 21', '#f55', '', 1.4], ...dots(R, [2, 3], [21, 3], [2, 21])],
  followMe: [['M17 1L22 6L19 10Q13 5 9 11Q7 17 11 20L7 23Q-1 18 2 9Q7 -2 17 1Z', K, '#6c6b5d', 1.5], ['M6 6Q10 2 16 4M5 10Q4 16 8 20', '#aaa98f', '', 1.2], ['M8 9L14 7L13 10Q17 13 22 8L21 14L23 16Q17 21 12 15L9 17Z', '#5d0007', R]],
  dimension: [['M3 14L13 3M3 14L11 22M13 3L22 12', K, ''], ['M0 12L6 16M5 11L2 17M10 2L16 5M15 0L11 6', K, '', 1.6], ...dots('#2fc84a', [22, 12], [11, 22]), ['M2 4Q8 0 6 5Q9 9 5 8', '#444', '', 1]],
  protractor: [['M1 19Q3 3 22 2Q21 15 3 23Z', K, '#f0dd1c', 1.2], ['M5 17Q8 8 17 6Q14 14 5 17Z', K, '#f2f2f2'], ['M3 15L6 16M6 9L8 11M12 5L13 7', K, '', 0.8]],
  axes: [['M12 13V4', '#2c62ad', '', 2], ['M9 6L12 0L15 6Z', '', '#2c62ad'], ['M12 13L18 9', '#2f9d49', '', 1.3], ['M16 7L23 5L19 11Z', '', '#2f9d49'], ['M12 13L18 18', R, '', 1.3], ['M16 19L23 21L20 15Z', '', R], ['M12 13L3 8', '#e46', '', 1.4, '2 1'], ['M12 13L4 19', '#49a35f', '', 1.4, '2 1'], ['M12 15V22', '#a9bbdb', '', 2], [dot(12, 13, 2), '', K]],
  text3d: [['M5 3L11 0L16 2L21 18L24 20L17 24L13 22L13 18L9 17L8 20L10 21L5 23L1 20L4 18Z', K, '#79786a', 1.3], ['M9 6L13 15L9 13Z', K, '#e0e0e0'], ['M11 1L19 21', '#aaa98f', '', 1]],
  start: [['M2 5L10 4V11H2ZM11 4L22 2V11H11ZM2 12H10V20L2 19ZM11 12H22V22L11 20Z', '', K]],
  search: [[dot(15, 8, 6), K, '', 1.5], ['M11 12L2 22', K, '', 1.8]],
  cortana: [[dot(12, 12, 7), K, '', 2.4]],
  monitor: [['M1 3H23V18H1Z', '#667482', '#2b9df1', 1.4], ['M2 4H14L11 17H2Z', '', '#62c2fa'], ['M10 18H15V21H18V22H7V21H10Z', '', '#7a8691']],
  cad: [['M0 0H24V24H0Z', W, '#128478', 1.6], ['M3 20L9 3H11L15 20M5 15H13M16 0V14M16 20V24M13 15H19V20H13ZM19 12H24', '#e2f7ee', '', 2]],
  ie: [[dot(12, 13, 10), '', '#61be25'], ['M5 14H19Q18 6 12 7Q7 8 7 13Q8 20 18 17', W, '', 3], ['M2 23Q-1 14 9 8T23 1Q24 6 21 10', '#52ac24', '', 1.6]],
  browser: [['M8 13Q13 14 14 10Q13 6 9 7Q4 10 6 15Q12 22 19 14L24 9', '#f09b1a', '', 4], ['M2 15Q0 4 8 2Q14 0 17 5', '#f4b32d', '', 3]],
  sketchup: [['M2 4L15 1L22 5V19L9 23L5 15Z', '', '#e42b32'], ['M6 8L15 5L19 8M5 13L13 10L19 13M10 17L19 14', W, '', 2.4]],
  zip: [['M0 7V4H6L8 1H22V10H0Z', '', '#55b9f4'], ['M0 7H24V16H0Z', '', '#2b98e5'], ['M0 16H24V20H0Z', '', '#f6a31b'], ['M0 20H24V23H0Z', '', '#42a63d'], ['M16 0H21V24H16Z', '', '#6e3a1c'], ['M15 12H22V17H15Z', '#d8b060', '', 1.4]],
  chrome: [[dot(12, 12, 11), '', '#35a852'], ['M12 12L2 7Q6 1 12 1T22 7L23 9H12Z', '', '#dc4437'], ['M12 9H23Q24 20 12 23Z', '', '#fcc934'], [dot(12, 12, 5.5), '', W], [dot(12, 12, 4.3), '', '#4286f4']],
  ps: [['M2 1H22Q23 1 23 2V22Q23 23 22 23H2Q1 23 1 22V2Q1 1 2 1Z', '#2fbdf2', '#0a1c2b', 1.8], { t: 'Ps', x: 5, y: 17, s: 13, c: '#c7ecff', w: 700 }],
};

const Icon = ({ name, size = 24 }) => (
  <svg width={size} height={size} viewBox="0 0 24 24" overflow="visible" aria-hidden="true">
    {icons[name].map((shape, index) => {
      if (shape.t) {
        return (
          <text
            key={index}
            x={shape.x}
            y={shape.y}
            fontSize={shape.s}
            fontFamily={`${shape.f || 'Liberation Sans'}, sans-serif`}
            fontWeight={shape.w}
            fill={shape.c}
            stroke={shape.o}
            strokeWidth={shape.o ? 0.8 : 0}
          >
            {shape.t}
          </text>
        );
      }
      const [d, stroke, fill, width = 1, dash] = shape;
      return (
        <path
          key={index}
          d={d}
          stroke={stroke || 'none'}
          fill={fill || 'none'}
          fillRule={name === 'frame' ? 'evenodd' : 'nonzero'}
          strokeWidth={width}
          strokeDasharray={dash}
        />
      );
    })}
  </svg>
);

// ---- toolbars: "|" is a separator, "name+" has a drop-down, "name*" is pressed ----

const toolbarRows = [
  {
    indent: true,
    bars: [
      'sheet nodes redBox cut hexDash push pipe dome sphereMix hexCone fillet chamfer angle redEdge redWave sail posts manyPosts ringPosts screen wedgeWindow shelves ladder zig1 zig2 zig3 spiral escalator frame archFrame gridWall lattice chevrons louvres truss1 truss2 corrugated rafters roof',
    ],
  },
  {
    bars: [
      'bezier polyN cloudN smoothN sCurve greenArc roundRect swirl blueArc greenN hook cane wineArc | cyanN ring wrench loop wedge',
      'slabMenu | slabBlack slabBlue slabRed slabGreen slabBrown slabOrange slabPink',
      'tree',
    ],
  },
  {
    bars: [
      'orbit zoom zoomWindow zoomExtents previous hand walker eye feet',
      'wallPen wallUp window windowGrid fence steps stairway | check nodePick cornerCheck magnifyCorner redPlate bentArrow chain redBend cardArrow | weight pyramid raise bridge cutCube blocks picker books north plug | rb suRed* suapp',
      'layersS layersBlue layersRed layersMove',
      'section sectionHouse houseCut* houseFill*',
      'pointer boxRed boxGo',
    ],
  },
  {
    bars: [
      'select* | eraser pencil+ arc+ circle+ | pushpull offset move rotate scale | tape textNote bucket | orbit hand zoom zoomExtents | warehouse extWarehouse layout | rubyGear | user+',
      'cubeX cubeBack | cubeWire cubeHidden cubeShade cubeTexture* cubeMono',
      'houseIso houseTop houseFront houseRight houseBack houseLeft',
      'outerShell | intersect union subtract split',
      'warehouse boxUp boxGrey extWarehouse',
      'fan',
      'shield dropper frameGreen',
    ],
  },
];

const sidebarGroups = [
  'select* component bucket eraser',
  'pencil freehand rect rotRect circle polygon arcCorner arcHalf arc3 pie',
  'move pushpull rotate followMe scale offset',
  'tape dimension protractor textNote axes text3d',
  'orbit hand zoom zoomWindow zoomExtents previous',
  'walker eye feet section',
  'warehouse extWarehouse layout rubyGear',
];

const menus = ['文件(F)', '编辑(E)', '视图(V)', '相机(C)', '绘图(R)', '工具(T)', '窗口(W)', '扩展程序 (x)', '帮助(H)'];
const panels = ['图元信息', '材质', '组件', '样式', '标记', '阴影', '场景', '工具向导', '柔化边线', '照片匹配'];

const tasks = [
  { icon: 'start' },
  { icon: 'search', size: 20 },
  { icon: 'cortana' },
  { icon: 'monitor' },
  { icon: 'cad' },
  { icon: 'ie', open: true },
  { icon: 'browser', open: true },
  { icon: 'sketchup', open: true, active: true },
  { icon: 'zip', open: true },
  { icon: 'chrome', open: true },
  { icon: 'ps', open: true },
];

// ---- styled parts ----

const Screen = styled.div`
  position: relative;
  display: flex;
  flex-direction: column;
  height: 100vh;
`;

const TitleBar = styled.header`
  display: flex;
  align-items: center;
  height: 22px;
  padding: 0 2px 0 3px;
  gap: 5px;
  background: #fff;
`;

const Title = styled.h1`
  flex: 1;
  margin: 0;
  font-family: Inter, "Noto Sans CJK SC", sans-serif;
  font-size: 12px;
  font-weight: 400;
`;

const WindowControls = styled.div`
  display: flex;
`;

const WindowButton = styled.button`
  display: flex;
  align-items: center;
  justify-content: center;
  width: 46px;
  height: 20px;
  padding: 0;
  border: 0;
  background: none;
`;

const MenuBar = styled.nav`
  display: flex;
  align-items: center;
  gap: 15px;
  height: 20px;
  padding: 1px 7px 0;
  background: #fff;
`;

const MenuButton = styled.button`
  padding: 0;
  border: 0;
  background: none;
  line-height: 18px;
  white-space: nowrap;
`;

const Toolbars = styled.div`
  background: #efefef;
`;

const ToolbarRow = styled.div`
  display: flex;
  height: 38px;
  padding-left: ${({ $indent }) => ($indent ? '64px' : '0')};
`;

const Toolbar = styled.div`
  position: relative;
  display: flex;
  align-items: center;
  padding: 0 1px 0 10px;
  border-top: 1px solid #f9f9f9;
  border-right: 1px solid #b0b0b0;
  border-bottom: 1px solid #b0b0b0;
  background: #f2f2f2;

  &::before {
    content: "";
    position: absolute;
    top: 3px;
    bottom: 3px;
    left: 4px;
    width: 2px;
    background: repeating-linear-gradient(#bdbdbd 0 2px, transparent 2px 4px);
  }
`;

const ToolButton = styled.button`
  display: flex;
  align-items: center;
  justify-content: center;
  width: ${({ $wide }) => ($wide ? '56px' : '34px')};
  height: 34px;
  padding: ${({ $wide }) => ($wide ? '0 0 0 2px' : '0')};
  gap: 8px;
  border: 1px solid transparent;
  background: none;

  ${({ $pressed }) => $pressed && css`
    border-color: #90c8f6;
    background: #c2dcf3;
  `}
`;

const Separator = styled.span`
  width: 1px;
  height: 30px;
  margin: 0 4px 0 3px;
  background: #8a8a8a;
`;

const Workspace = styled.div`
  display: flex;
  flex: 1;
  min-height: 0;
`;

const Sidebar = styled.aside`
  width: 72px;
  padding-top: 54px;
`;

const SideTools = styled.div`
  padding: 9px 1px 1px 2px;
  border-top: 1px solid #fafafa;
  border-right: 1px solid #b0b0b0;
  border-bottom: 1px solid #b0b0b0;
  background:
    repeating-linear-gradient(90deg, #bdbdbd 0 2px, transparent 2px 4px) 3px 4px / 64px 2px no-repeat,
    #f2f2f2;
`;

const SideGroup = styled.div`
  display: grid;
  grid-template-columns: 34px 34px;

  & + & {
    margin-top: 3px;
    padding-top: 4px;
    border-top: 1px solid #8f8f8f;
  }
`;

const Viewport = styled.main`
  display: flex;
  flex: 1;
  min-width: 0;
  margin-top: 1px;
  border-top: 2px solid #6f6e73;
  border-left: 2px solid #6f6e73;
  border-bottom: 1px solid #fff;
  background: #bfbfc5;

  svg {
    width: 100%;
    height: 100%;
  }
`;

const Tray = styled.aside`
  display: flex;
  flex-direction: column;
  width: 286px;
  padding-top: 1px;
  border-left: 6px solid #f0f0f0;
  background: #f4f7fc;
`;

const TrayHeader = styled.div`
  display: flex;
  align-items: center;
  height: 18px;
  margin-bottom: 3px;
  padding: 0 4px;
  gap: 7px;
  background: linear-gradient(#bfcddd, #d5e2f1);
`;

const TrayTitle = styled.h2`
  flex: 1;
  margin: 0;
  padding-bottom: 2px;
  font-size: 13px;
  font-weight: 400;
  line-height: 16px;
`;

const TrayButton = styled.button`
  display: flex;
  align-items: center;
  justify-content: center;
  width: 12px;
  height: 12px;
  padding: 0;
  border: 0;
  background: ${({ $danger }) => ($danger ? '#c75050' : 'none')};
`;

const PanelRow = styled.div`
  display: flex;
  align-items: center;
  height: 18px;
  margin-bottom: 1px;
  padding: 0 3px 0 8px;
  border: 1px solid #adadad;
  border-width: 1px 0 1px 1px;
  background: linear-gradient(#ececec, #b6b6b6);
`;

const PanelToggle = styled.button`
  display: flex;
  flex: 1;
  align-items: center;
  gap: 7px;
  padding: 0;
  border: 0;
  background: none;
  line-height: 16px;
`;

const PanelClose = styled.button`
  display: flex;
  align-items: center;
  justify-content: center;
  width: 13px;
  height: 13px;
  padding: 0;
  border: 1px solid #a2a2a2;
  outline: 1px solid #eee;
  background: #e4e4e4;
`;

const StatusBar = styled.footer`
  display: flex;
  align-items: center;
  height: 28px;
  padding: 0 4px 2px 6px;
  gap: 16px;
  border-top: 1px solid #f6f6f6;
  font-size: 16px;
`;

const StatusText = styled.p`
  flex: 1;
  margin: 0 0 0 -6px;
  line-height: 24px;
`;

const StatusRule = styled.span`
  width: 1px;
  height: 10px;
  margin-left: -4px;
  background: #888;
`;

const Measure = styled.label`
  display: flex;
  align-items: center;
  gap: 9px;
  margin-left: -6px;
`;

const MeasureInput = styled.input`
  width: 201px;
  height: 24px;
  border: 1px solid #a9bdd8;
  background: #f4f7fc;
`;

const TaskBar = styled.nav`
  display: flex;
  gap: 1px;
  height: 40px;
  background: linear-gradient(90deg, #d4d4d4, #d8d8d8 30%, #e3e2e1 60%, #ebe6e4 76%, #e5e9ea 82%, #e8e6e5);
`;

const TaskButton = styled.button`
  position: relative;
  display: flex;
  align-items: center;
  justify-content: center;
  width: 48px;
  padding: 0;
  border: 0;
  background: ${({ $active }) => ($active ? '#efefef' : 'none')};

  ${({ $open, $active }) => $open && css`
    &::after {
      content: "";
      position: absolute;
      right: ${$active ? '0' : '4px'};
      bottom: 0;
      left: ${$active ? '0' : '4px'};
      height: 2px;
      background: #0a78d4;
    }
  `}
`;

const TrayChevron = styled.span`
  align-self: center;
  margin-left: auto;
  padding-right: 196px;
`;

const Watermark = styled.svg`
  position: absolute;
  right: 90px;
  bottom: 30px;
  width: 360px;
  height: 180px;
  pointer-events: none;
`;

const ImeBar = styled.div`
  position: absolute;
  right: 1px;
  bottom: 149px;
  display: flex;
  align-items: center;
  height: 23px;
  padding: 0 0 0 26px;
  border: 1px solid #a9b3bf;
  background: #fff;
`;

const ImeLogo = styled.span`
  position: absolute;
  left: -4px;
  top: -4px;
`;

const ImeButton = styled.button`
  display: flex;
  align-items: center;
  justify-content: center;
  width: 22px;
  height: 20px;
  padding: 0;
  border: 0;
  background: none;
  color: #1c74c8;
  font-size: 15px;
  font-weight: 700;
  line-height: 20px;
`;

const Brand = styled.div`
  position: absolute;
  right: 0;
  bottom: 0;
  display: flex;
  align-items: center;
  gap: 7px;
  width: 200px;
  height: 95px;
  padding-left: 11px;
  background: #232f55;
  color: #d2d2d2;
`;

const BrandName = styled.div`
  font-family: Roboto, "Noto Sans CJK SC", sans-serif;
  font-size: 30px;
  line-height: 34px;
  white-space: nowrap;
`;

const BrandSite = styled.div`
  font-family: Roboto, sans-serif;
  font-size: 25px;
  font-weight: 300;
  line-height: 26px;
`;

// ---- components ----

const Tool = ({ token }) => {
  const wide = token.endsWith('+');
  const name = token.replace(/[+*]$/, '');
  const [pressed, setPressed] = useState(token.endsWith('*'));

  return (
    <ToolButton
      type="button"
      aria-label={name}
      aria-pressed={pressed}
      $wide={wide}
      $pressed={pressed}
      onClick={() => setPressed(!pressed)}
    >
      <Icon name={name} />
      {wide && (
        <svg width="12" height="8" aria-hidden="true">
          <path d="M0 1H12L6 8Z" fill="#000" />
        </svg>
      )}
    </ToolButton>
  );
};

const ToolbarArea = () => (
  <Toolbars>
    {toolbarRows.map((row, rowIndex) => (
      <ToolbarRow key={rowIndex} $indent={row.indent}>
        {row.bars.map((bar) => (
          <Toolbar key={bar} role="toolbar">
            {bar.split(' ').map((token, index) => (
              token === '|' ? <Separator key={index} /> : <Tool key={index} token={token} />
            ))}
          </Toolbar>
        ))}
      </ToolbarRow>
    ))}
  </Toolbars>
);

const planWalls = [
  // top left
  'M44 40L240 38L268 198L58 200L54 130ZM50 92L246 90M148 40L160 140M62 138L256 140M56 170H92M176 172L262 170M216 170L226 190M170 140L176 196',
  // top right
  'M378 38L574 36L628 194L416 196ZM394 92L590 88M486 38L518 140M408 134L600 138M416 166L612 168M518 140L530 160M570 166L580 180',
  // bottom left
  'M62 246L276 244L312 438L82 440ZM68 280H284M72 312L290 310M126 246L130 310M196 280L202 436M218 280L222 310M224 246V280M132 264H224M76 296H194M198 372L300 370M84 402L306 400M230 372L240 436M256 402L262 436M232 420H262',
  // bottom right
  'M432 244L646 240L710 434L478 436ZM442 278L656 274M454 308L668 308M496 246L512 306M568 276L604 434M588 274L600 306M590 242L596 276M500 262H592M448 294H566M470 366L686 368M480 400L696 398M620 368L646 434M640 402L660 434M628 416H656',
];

const Drawing = () => (
  <svg viewBox="74 197 1560 814" preserveAspectRatio="xMidYMid slice" role="img" aria-label="模型">
    <g shapeRendering="crispEdges" fill="none">
      <path d="M1042 196L1634 645" stroke="#b3101c" />
      <path d="M1042 196L1048 202" stroke="#222" strokeDasharray="2 2" />
      <path d="M74 898.5L480 892.5L900 887.5L1270 882.5L1634 878.5" stroke="#00a800" />
    </g>
    <g transform="translate(880 740) scale(0.3333)" fill="none" stroke="#000">
      {planWalls.map((d) => <path key={d} d={d} strokeWidth="8" />)}
      <path d="M44 40L56 90L58 200M378 38L416 196M62 246L82 440M432 244L478 436" strokeWidth="16" strokeDasharray="12 20" />
      <path d="M240 38L268 198M574 36L628 194M276 244L312 438M646 240L710 434" strokeWidth="11" strokeDasharray="16 8" />
      <g fill="#000" strokeWidth="2">
        <path d="M60 118L84 126L90 142H174V178H134V196H78V170L58 162Z" />
        <path d="M408 124Q450 150 532 150L530 166Q440 170 412 136ZM436 160H488V196H438Z" />
        <path d="M84 362L112 356Q140 384 204 376V398Q112 400 84 362ZM100 398H158V438H104Z" />
        <path d="M472 360L492 350Q530 376 598 374V398Q500 400 472 360ZM494 398H552V436H502Z" />
        <path d="M182 46H216V62H184ZM206 104H230V112H206ZM210 124H230V134H212ZM114 40H138V52ZM162 108L190 116L164 124Z" />
        <path d="M538 74L548 76L554 82L576 84V122L562 130L544 124L538 112ZM512 80H528V108L516 124ZM412 42Q430 54 450 42ZM412 88L424 76L434 88ZM470 88L484 78L498 92Z" />
      </g>
      <ellipse cx="104" cy="68" rx="29" ry="15" strokeWidth="5" />
      <ellipse cx="108" cy="70" rx="7" ry="5" fill="#000" />
      <ellipse cx="206" cy="76" rx="16" ry="9" strokeWidth="7" />
      <path d="M404 94Q440 144 520 152M458 312Q500 370 560 380" strokeWidth="4" />
      <path d="M134 190V178H172M182 194Q196 168 212 194M538 192V178H568M546 192Q560 168 574 192" strokeWidth="5" />
      <path d="M162 434V416H200M566 430V414H604M160 250L186 260M530 248L556 258" strokeWidth="6" />
    </g>
  </svg>
);

const CloseMark = ({ color = '#222' }) => (
  <svg width="6" height="6" viewBox="0 0 6 6" aria-hidden="true">
    <path d="M0 1L5 6M5 1L0 6" stroke={color} strokeWidth="1.3" />
  </svg>
);

const DefaultTray = () => (
  <Tray>
    <TrayHeader>
      <TrayTitle>默认面板</TrayTitle>
      <TrayButton type="button" aria-label="固定">
        <svg width="8" height="9" viewBox="0 0 8 9" aria-hidden="true">
          <path d="M2 0.5H6V5.5M2.5 0V5M0 5.5H8M4 5V9M5 0V5" stroke="#000" fill="none" />
        </svg>
      </TrayButton>
      <TrayButton type="button" aria-label="关闭" $danger>
        <CloseMark color="#fff" />
      </TrayButton>
    </TrayHeader>
    {panels.map((panel) => (
      <PanelRow key={panel}>
        <PanelToggle type="button">
          <svg width="6" height="8" aria-hidden="true"><path d="M0 0L6 4L0 8Z" /></svg>
          {panel}
        </PanelToggle>
        <PanelClose type="button" aria-label={`关闭${panel}`}><CloseMark /></PanelClose>
      </PanelRow>
    ))}
  </Tray>
);

const BaiduMark = () => (
  <Watermark viewBox="1470 870 360 180" aria-hidden="true">
    <g
      fill="#fff"
      fillOpacity="0.74"
      stroke="#85858f"
      strokeOpacity="0.28"
      strokeWidth="3"
      paintOrder="stroke"
      fontWeight="700"
      fontFamily="Liberation Sans, sans-serif"
    >
      <text x="1473" y="983" fontSize="76">Bai</text>
      <ellipse cx="1605" cy="917" rx="12" ry="16" />
      <ellipse cx="1629" cy="894" rx="12" ry="16" />
      <ellipse cx="1660" cy="895" rx="13" ry="16" />
      <ellipse cx="1679" cy="925" rx="13" ry="16" />
      <path d="M1642 920Q1652 920 1660 933Q1667 943 1677 950Q1688 960 1683 974Q1678 986 1662 984Q1642 980 1622 984Q1604 986 1600 972Q1597 957 1608 948Q1618 940 1625 930Q1632 920 1642 920Z" />
      <text x="1694" y="978" fontSize="58" fontFamily="Noto Sans CJK SC, sans-serif">经验</text>
      <text x="1476" y="1026" fontSize="40" fontWeight="400">jingyan.baidu</text>
      <text x="1612" y="975" fontSize="49" fill="#e4e4e9" strokeOpacity="0.6">du</text>
    </g>
  </Watermark>
);

const InputMethodBar = () => (
  <ImeBar>
    <ImeLogo>
      <svg width="29" height="28" viewBox="0 0 29 28" aria-hidden="true">
        <path d="M1 5Q1 3 3 3L21 0Q23 0 24 2L28 22Q28 24 26 24L7 27Q5 27 4 25Z" fill="#f0501c" />
        <path d="M23 7Q14 4 8 8Q5 12 12 13Q22 13 21 17Q17 21 6 19" stroke="#fff" strokeWidth="4" fill="none" />
      </svg>
    </ImeLogo>
    <ImeButton type="button">中</ImeButton>
    <ImeButton type="button" aria-label="标点">
      <svg width="12" height="14" viewBox="0 0 12 14" fill="#1c74c8" aria-hidden="true">
        <circle cx="3" cy="4" r="2" fill="none" stroke="#1c74c8" strokeWidth="1.3" />
        <path d="M7 7H11V10Q11 13 7 14V12Q9 11 9 10H7Z" />
      </svg>
    </ImeButton>
    <ImeButton type="button" aria-label="表情">
      <svg width="16" height="16" viewBox="0 0 16 16" fill="none" stroke="#1c74c8" strokeWidth="1.6" aria-hidden="true">
        <circle cx="8" cy="8" r="7" />
        <path d="M5.5 4V7M10.5 4V7M4 9Q8 14 12 9" />
      </svg>
    </ImeButton>
    <ImeButton type="button" aria-label="语音">
      <svg width="12" height="16" viewBox="0 0 12 16" fill="none" stroke="#1c74c8" strokeWidth="1.8" aria-hidden="true">
        <rect x="4" y="1" width="4" height="8" rx="2" fill="#1c74c8" />
        <path d="M1 7Q1 12 6 12T11 7M6 12V15M3 15H9" />
      </svg>
    </ImeButton>
    <ImeButton type="button" aria-label="键盘">
      <svg width="16" height="12" viewBox="0 0 16 12" aria-hidden="true">
        <rect width="16" height="12" rx="1" fill="#1c74c8" />
        <path d="M2 3.5H14M2 6.5H14" stroke="#fff" strokeWidth="1.6" strokeDasharray="2 1" />
        <path d="M4 9.5H12" stroke="#fff" strokeWidth="1.2" />
      </svg>
    </ImeButton>
    <ImeButton type="button" aria-label="账户">
      <svg width="15" height="16" viewBox="0 0 15 16" fill="#b9c4dc" aria-hidden="true">
        <circle cx="6" cy="4" r="3.5" />
        <path d="M0 14Q0 8 6 8Q9 8 11 10V14Z" />
        <path d="M8 8H14V15H8Z" fill="#fff" stroke="#b9c4dc" />
        <path d="M11 9V14" stroke="#b9c4dc" strokeDasharray="2 1" />
      </svg>
    </ImeButton>
    <ImeButton type="button" aria-label="皮肤">
      <svg width="14" height="14" viewBox="0 0 14 14" fill="#1c74c8" aria-hidden="true">
        <path d="M4 0Q7 3 10 0L14 3L12 7L11 6V14H3V6L2 7L0 3Z" />
      </svg>
    </ImeButton>
    <ImeButton type="button" aria-label="工具箱">
      <svg width="14" height="14" viewBox="0 0 14 14" fill="#1c74c8" aria-hidden="true">
        <path d="M0 1H6V7H0ZM0 8H6V14H0ZM8 8H14V14H8Z" />
        <path d="M8.7 1.7H13.3V6.3H8.7Z" fill="none" stroke="#1c74c8" strokeWidth="1.4" />
      </svg>
    </ImeButton>
  </ImeBar>
);

const BrandBadge = () => (
  <Brand>
    <svg width="47" height="61" viewBox="870 428 140 182" aria-hidden="true">
      <path d="M886 450L903 462L920 461L932 471L918 478L911 492C914 506 925 515 945 520C972 522 990 534 991 552L982 562L994 602H978L970 572L958 552Q930 558 913 552L904 602H893L899 552C880 540 876 510 882 495Q892 482 893 468Z" fill="#d2d2d2" />
      <path d="M914 462Q905 448 918 436M912 449L924 436M918 460Q930 440 950 434M930 448Q950 452 962 460Q985 465 1004 440M945 455L938 440M962 460L955 440M978 459L972 446M935 455Q950 464 968 462" fill="none" stroke="#d2d2d2" strokeWidth="4" />
    </svg>
    <div>
      <BrandName>3D溜溜网</BrandName>
      <BrandSite>3D66.COM</BrandSite>
    </div>
  </Brand>
);

const App = () => {
  const [measure, setMeasure] = useState('');

  return (
    <Screen>
      <GlobalStyle />
      <TitleBar>
        <Icon name="sketchup" size={14} />
        <Title>无标题 - SketchUp Pro 2020</Title>
        <WindowControls>
          <WindowButton type="button" aria-label="最小化">
            <svg width="10" height="10"><path d="M0 5.5H10" stroke="#000" /></svg>
          </WindowButton>
          <WindowButton type="button" aria-label="还原">
            <svg width="10" height="10"><path d="M0.5 2.5H7.5V9.5H0.5ZM2.5 2V0.5H9.5V7.5H8" stroke="#000" fill="none" /></svg>
          </WindowButton>
          <WindowButton type="button" aria-label="关闭">
            <svg width="10" height="10"><path d="M0 0L10 10M10 0L0 10" stroke="#000" /></svg>
          </WindowButton>
        </WindowControls>
      </TitleBar>
      <MenuBar>
        {menus.map((menu) => <MenuButton key={menu} type="button">{menu}</MenuButton>)}
      </MenuBar>
      <ToolbarArea />
      <Workspace>
        <Sidebar>
          <SideTools role="toolbar">
            {sidebarGroups.map((group) => (
              <SideGroup key={group}>
                {group.split(' ').map((token) => <Tool key={token} token={token} />)}
              </SideGroup>
            ))}
          </SideTools>
        </Sidebar>
        <Viewport><Drawing /></Viewport>
        <DefaultTray />
      </Workspace>
      <StatusBar>
        <svg width="14" height="14" viewBox="0 0 14 14" aria-hidden="true">
          <circle cx="7" cy="7" r="6.3" fill="none" stroke="#999" />
          <path d="M7 2Q10 2 10 5Q10 7 8 8V12H6V8Q4 7 4 5Q4 2 7 2Z" fill="#999" />
        </svg>
        <svg width="14" height="14" viewBox="0 0 14 14" aria-hidden="true">
          <circle cx="7" cy="7" r="6.2" fill="none" stroke="#000" strokeWidth="1.3" />
          <path d="M6 2H8V4H6ZM5 5H9V9H8V12H6V9H5Z" />
        </svg>
        <StatusRule />
        <StatusText>选择对象。切换到扩充选择。拖动鼠标选择多项。</StatusText>
        <StatusRule />
        <Measure>
          数值
          <MeasureInput value={measure} onChange={(event) => setMeasure(event.target.value)} />
        </Measure>
      </StatusBar>
      <TaskBar>
        {tasks.map((task) => (
          <TaskButton key={task.icon} type="button" aria-label={task.icon} $open={task.open} $active={task.active}>
            <Icon name={task.icon} size={task.size || 22} />
          </TaskButton>
        ))}
        <TrayChevron>
          <svg width="10" height="6" aria-hidden="true"><path d="M0 6L5 1L10 6" stroke="#000" fill="none" /></svg>
        </TrayChevron>
      </TaskBar>
      <InputMethodBar />
      <BaiduMark />
      <BrandBadge />
    </Screen>
  );
};

export default App;
